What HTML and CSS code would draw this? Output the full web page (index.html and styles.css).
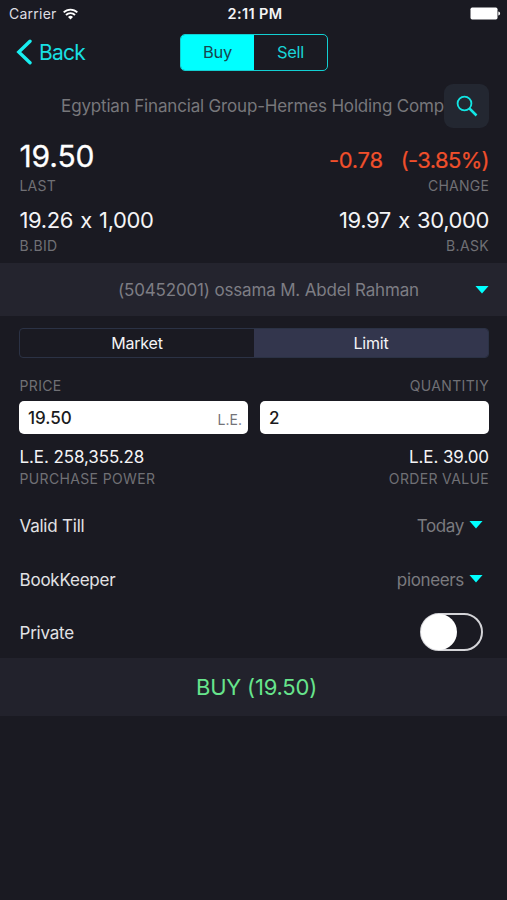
FILE: index.html
```html
<!DOCTYPE html>
<html lang="en">
<head>
<meta charset="utf-8">
<title>Buy order</title>
<link rel="stylesheet" href="styles.css">
</head>
<body>
<main class="screen">
  <header class="status">
    <div class="carrier"><span>Carrier</span>
      <svg width="15" height="12" viewBox="0 0 15 12" fill="none" stroke="#fff" stroke-width="1.9"><path d="M.7 4.4a9.6 9.6 0 0 1 13.6 0M3 7a6.3 6.3 0 0 1 9 0"/><path d="M7.5 11.5 5 9a3.5 3.5 0 0 1 5 0z" fill="#fff" stroke="none"/></svg>
    </div>
    <span class="time">2:11 PM</span>
    <svg class="battery" width="31" height="13" viewBox="0 0 31 13" fill="#fff"><rect x=".5" y=".5" width="27" height="12" rx="1.7"/><path d="M28.3 4.5c2.4.3 2.4 3.7 0 4z"/></svg>
  </header>

  <nav class="nav">
    <a class="back"><svg width="17" height="26" viewBox="0 0 17 26" fill="none" stroke="#18eef0" stroke-width="3.4" stroke-linecap="round"><path d="M14 2.2 2.8 13 14 23.8"/></svg><span>Back</span></a>
    <div class="side"><span class="side-item active">Buy</span><span class="side-item">Sell</span></div>
  </nav>

  <section class="search">
    <span class="company">Egyptian Financial Group-Hermes Holding Comp</span>
    <button class="search-btn" aria-label="Search"><svg width="22" height="22" viewBox="0 0 22 22" fill="none" stroke="#12e6e4" stroke-width="1.8"><circle cx="8.5" cy="8.5" r="6.9"/><path d="m13.5 13.5 7 7" stroke-width="2.5"/></svg></button>
  </section>

  <section class="quotes">
    <div class="pair last"><span class="price">19.50</span><span class="change"><span>-0.78</span><span class="pct">(-3.85%)</span></span></div>
    <div class="pair label top-label"><span>LAST</span><span>CHANGE</span></div>
    <div class="pair book"><span class="bid">19.26 x 1,000</span><span class="ask">19.97 x 30,000</span></div>
    <div class="pair label book-label"><span>B.BID</span><span>B.ASK</span></div>
  </section>

  <section class="account"><span class="account-name">(50452001) ossama M. Abdel Rahman</span><i class="caret"></i></section>

  <div class="type"><span class="type-item">Market</span><span class="type-item active">Limit</span></div>

  <section class="form">
    <div class="pair label form-label"><span>PRICE</span><span>QUANTITIY</span></div>
    <div class="fields">
      <div class="field"><span>19.50</span><span class="unit">L.E.</span></div>
      <div class="field"><span>2</span></div>
    </div>
    <div class="pair totals"><span>L.E. 258,355.28</span><span>L.E. 39.00</span></div>
    <div class="pair label totals-label"><span>PURCHASE POWER</span><span>ORDER VALUE</span></div>
  </section>

  <section class="options">
    <div class="option"><span>Valid Till</span><span class="choice"><span>Today</span><i class="caret"></i></span></div>
    <div class="option"><span>BookKeeper</span><span class="choice"><span>pioneers</span><i class="caret"></i></span></div>
    <div class="option"><span>Private</span><span class="toggle"><i class="knob"></i></span></div>
  </section>

  <div class="submit"><span>BUY (19.50)</span></div>
</main>
</body>
</html>
```
FILE: styles.css
```css
* { box-sizing: border-box; }
body {
  margin: 0;
  background: #1a1a22;
  color: #f4f4f6;
  font-family: Inter, "Liberation Sans", sans-serif;
  font-size: 17px;
  font-feature-settings: "calt" 0;
}
span { white-space: nowrap; }
.screen { width: 507px; height: 900px; overflow: hidden; background: #1a1a22; }

.status {
  display: grid;
  grid-template-columns: 1fr auto 1fr;
  align-items: center;
  height: 27px;
  padding: 0 6px 0 9px;
  font-size: 14px;
}
.carrier { display: flex; align-items: center; gap: 6px; color: #dedee2; letter-spacing: .25px; }
.time { font-weight: 600; font-size: 14.5px; letter-spacing: .35px; }
.battery { justify-self: end; }

.nav {
  display: grid;
  grid-template-columns: 164px 148px 1fr;
  align-items: center;
  height: 50px;
  padding-left: 16px;
}
.back { display: flex; align-items: center; gap: 6px; color: #18dfe2; font-size: 21px; letter-spacing: -.8px; }
.side {
  display: flex;
  height: 37px;
  border: 1.5px solid #12cfd2;
  border-radius: 5px;
  overflow: hidden;
  font-size: 16.5px;
  letter-spacing: -.3px;
}
.side-item { flex: 1; display: flex; align-items: center; justify-content: center; color: #18d3d6; }
.side-item.active { background: #00ffff; color: #17474f; }

.search { display: flex; align-items: center; justify-content: flex-end; margin-top: 7px; padding-right: 18px; height: 44px; }
.company { color: #77777b; font-size: 17px; letter-spacing: -.17px; }
.search-btn {
  display: grid;
  place-items: center;
  width: 45px;
  height: 44px;
  padding: 0;
  border: 0;
  border-radius: 9px;
  background: #232731;
}

.pair { display: flex; justify-content: space-between; padding: 0 18px 0 19.5px; }
.label { color: #707075; font-size: 14px; line-height: 22px; letter-spacing: .35px; }
.quotes { height: 135px; padding-top: 10px; }
.last { height: 36px; line-height: 36px; }
.price { font-size: 30px; letter-spacing: -.1px; color: #fff; -webkit-text-stroke: .3px #fff; }
.change { display: flex; gap: 18px; padding-top: 4px; font-size: 22px; letter-spacing: -.3px; color: #f04f2b; -webkit-text-stroke: .2px #f04f2b; }
.pct { letter-spacing: -.65px; }
.top-label { height: 32px; line-height: 24px; letter-spacing: .2px; }
.book { font-size: 22px; line-height: 28px; letter-spacing: -.4px; word-spacing: 1.5px; }
.book-label { line-height: 23px; }
.account { display: flex; align-items: center; height: 53px; padding: 0 18px 0 118px; justify-content: space-between; background: #24242e; }
.account-name { color: #7d7d84; font-size: 17px; letter-spacing: -.17px; }
.caret { width: 14px; height: 8px; background: #00ffff; clip-path: polygon(0 0, 100% 0, 50% 100%); }

.type {
  display: flex;
  height: 30px;
  margin: 12px 18px 0 19px;
  border: 1px solid #2b3245;
  border-radius: 4px;
  overflow: hidden;
  font-size: 16px;
  letter-spacing: -.2px;
}
.type-item { flex: 1; display: flex; align-items: center; justify-content: center; }
.type-item.active { background: #33364d; }

.form { height: 140px; padding-top: 17px; }
.fields { display: grid; grid-template-columns: 1fr 1fr; gap: 12px; margin: 4px 18px 0 19px; }
.field {
  display: flex;
  align-items: center;
  justify-content: space-between;
  height: 33px;
  padding: 0 6px 0 9px;
  border-radius: 5px;
  background: #fff;
  color: #1b1b20;
  font-weight: 500;
}
.unit { padding-top: 4px; color: #737378; font-size: 14px; font-weight: 400; }
.totals { margin-top: 12px; line-height: 22px; letter-spacing: -.1px; }

.option { display: flex; align-items: center; justify-content: space-between; height: 54px; padding: 1px 24px 0 19.5px; color: #e2e2e5; letter-spacing: -.22px; }
.option:last-child { height: 52px; padding-top: 0; }
.option:last-child > span:first-child { padding-top: 2px; }
.choice { display: flex; align-items: center; gap: 5px; color: #7b7b7f; letter-spacing: -.35px; }
.choice .caret { margin-top: -2px; }
.toggle { display: flex; width: 63px; height: 38px; border: 2px solid #d4d4d8; border-radius: 19px; }
.knob { width: 36px; height: 36px; margin: -1px; border-radius: 50%; background: #fff; }

.submit { display: flex; align-items: center; justify-content: center; height: 58px; padding-left: 6px; background: #22222c; color: #67e58c; font-size: 22px; letter-spacing: -.2px; }
```
